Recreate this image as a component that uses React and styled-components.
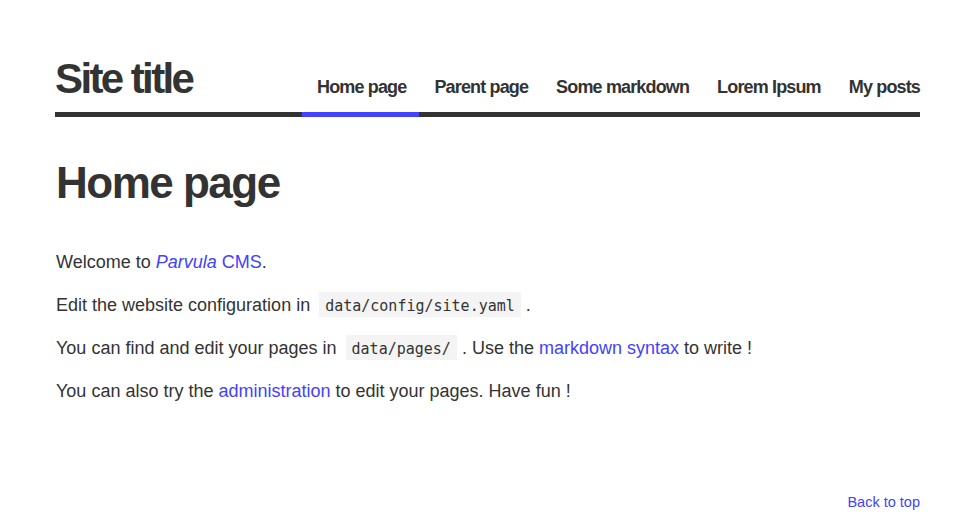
import React from "react";
import styled, { createGlobalStyle } from "styled-components";

const Global = createGlobalStyle`
  html, body { margin: 0; padding: 0; background: #fff; }
  body {
    font-family: "Liberation Sans", Arial, Helvetica, sans-serif;
    color: #333;
  }
`;

const Page = styled.div`
  padding: 0 55px;
`;

const Header = styled.header`
  display: flex;
  align-items: flex-end;
  justify-content: space-between;
  padding-top: 58px;
  border-bottom: 5px solid #333;
`;

const SiteTitle = styled.div`
  font-size: 42px;
  line-height: 1;
  font-weight: 700;
  letter-spacing: -2.6px;
  margin: 0 0 12px 0;
  color: #333;
`;

const Nav = styled.nav`
  display: flex;
  margin-bottom: -5px;
`;

const NavItem = styled.a`
  display: block;
  font-size: 18px;
  line-height: 1.2;
  font-weight: 700;
  letter-spacing: -0.85px;
  color: #333;
  text-decoration: none;
  padding: 0 13px 13px 15px;
  border-bottom: 5px solid ${(p) => (p.$active ? "#4242ff" : "transparent")};
  &:last-child {
    padding-right: 0;
  }
`;

const Main = styled.main``;

const Title = styled.h1`
  font-size: 44px;
  line-height: 1.2;
  font-weight: 700;
  letter-spacing: -1.5px;
  margin: 40px 0 39px 1px;
  color: #333;
`;

const Para = styled.p`
  font-size: 18px;
  line-height: 1.5;
  margin: 16px 0;
  padding-left: 1px;
`;

const Link = styled.a`
  color: #4242ff;
  text-decoration: none;
`;

const Code = styled.code`
  font-family: "DejaVu Sans Mono", "Liberation Mono", monospace;
  font-size: 15px;
  background: #f4f4f4;
  padding: 5px 6px 2px;
  margin: 0 0 0 4px;
  color: #333;
`;

const Footer = styled.footer`
  display: flex;
  justify-content: flex-end;
  margin-top: 87px;
`;

const TopLink = styled.a`
  font-size: 14.5px;
  line-height: 1.5;
  color: #4242ff;
  text-decoration: none;
`;

const navItems = [
  { label: "Home page", active: true },
  { label: "Parent page" },
  { label: "Some markdown" },
  { label: "Lorem Ipsum" },
  { label: "My posts" },
];

export default function App() {
  return (
    <>
      <Global />
      <Page>
        <Header>
          <SiteTitle>Site title</SiteTitle>
          <Nav>
            {navItems.map((n) => (
              <NavItem key={n.label} href="#" $active={n.active}>
                {n.label}
              </NavItem>
            ))}
          </Nav>
        </Header>
        <Main>
          <Title>Home page</Title>
          <Para>
            Welcome to{" "}
            <Link href="#">
              <em>Parvula</em> CMS
            </Link>
            .
          </Para>
          <Para>
            Edit the website configuration in <Code>data/config/site.yaml</Code> .
          </Para>
          <Para>
            You can find and edit your pages in <Code>data/pages/</Code> . Use the{" "}
            <Link href="#">markdown syntax</Link> to write !
          </Para>
          <Para>
            You can also try the <Link href="#">administration</Link> to edit your pages. Have fun !
          </Para>
        </Main>
        <Footer>
          <TopLink href="#">Back to top</TopLink>
        </Footer>
      </Page>
    </>
  );
}
